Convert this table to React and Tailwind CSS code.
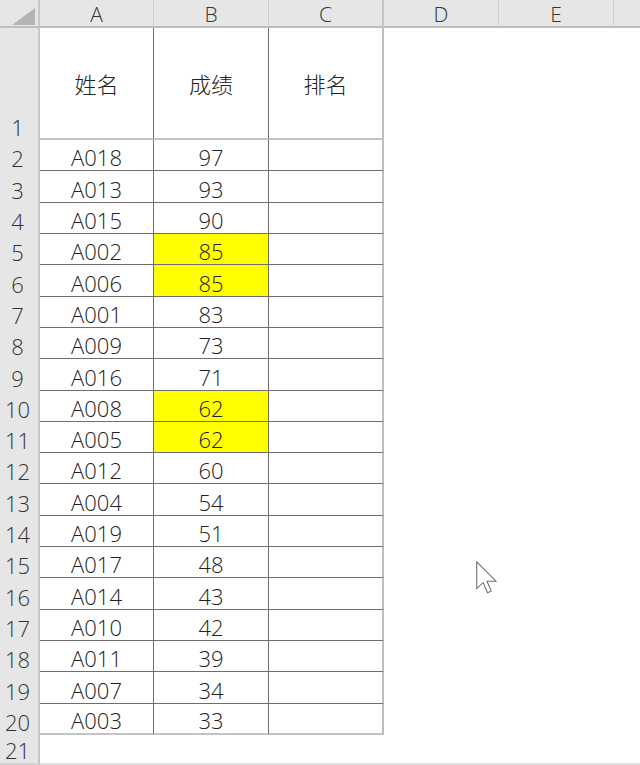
import React from "react";

const rows = [
  ["A018", "97"],
  ["A013", "93"],
  ["A015", "90"],
  ["A002", "85", true],
  ["A006", "85", true],
  ["A001", "83"],
  ["A009", "73"],
  ["A016", "71"],
  ["A008", "62", true],
  ["A005", "62", true],
  ["A012", "60"],
  ["A004", "54"],
  ["A019", "51"],
  ["A017", "48"],
  ["A014", "43"],
  ["A010", "42"],
  ["A011", "39"],
  ["A007", "34"],
  ["A003", "33"],
];

const font = { fontFamily: '"Open Sans", "Noto Sans CJK SC", sans-serif' };
const cjk = { fontFamily: '"Noto Sans CJK SC", sans-serif' };

export default function App() {
  const colHead = "bg-[#e6e6e6] border-b-2 border-b-[#bdbdbd] flex items-end justify-center text-[21px] leading-[24px] font-light text-[#333]";
  const rowHead = "bg-[#e6e6e6] border-r-2 border-r-[#c8c8c8] flex items-end justify-center pr-[3px] text-[22px] leading-[26px] font-light text-[#333]";
  const cell = "flex items-end justify-center text-[22px] leading-[26px] font-light text-[#222]";
  return (
    <div
      className="relative w-[640px] h-[765px] overflow-hidden bg-white grid grid-cols-[40px_114px_115px_115px_115px_115px_1fr] grid-rows-[28px_112px_repeat(19,minmax(0,1fr))_30px]"
      style={font}
    >
      {/* header row */}
      <div className="bg-[#e6e6e6] border-b-2 border-b-[#bdbdbd] border-r-2 border-r-[#c8c8c8] relative">
        <div className="absolute left-[12px] top-[8px] w-0 h-0 border-l-[23px] border-l-transparent border-b-[17px] border-b-[#b4b4b4]" />
      </div>
      {["A", "B", "C", "D", "E"].map((c, i) => (
        <div key={c} className={`${colHead} border-r ${i === 2 ? "border-r-2 border-r-[#c4c4c4]" : "border-r-[#cfcfcf]"}`}>
          {c}
        </div>
      ))}
      <div className={colHead} />

      {/* row 1 */}
      <div className={rowHead}>1</div>
      <div className="border-r border-r-[#6e6e6e] border-b-2 border-b-[#c4c4c4] flex items-center justify-center text-[22px] font-light text-[#222]" style={cjk}>姓名</div>
      <div className="border-r border-r-[#6e6e6e] border-b-2 border-b-[#c4c4c4] flex items-center justify-center text-[22px] font-light text-[#222]" style={cjk}>成绩</div>
      <div className="border-r-2 border-r-[#bdbdbd] border-b-2 border-b-[#c4c4c4] flex items-center justify-center text-[22px] font-light text-[#222]" style={cjk}>排名</div>
      <div />
      <div />
      <div />

      {rows.map(([name, score, hl], i) => {
        const last = i === rows.length - 1;
        const bb = last ? "border-b-2 border-b-[#c4c4c4]" : "border-b border-b-[#6e6e6e]";
        return (
          <React.Fragment key={name}>
            <div className={rowHead}>{i + 2}</div>
            <div className={`border-r border-r-[#6e6e6e] ${bb} ${cell}`}>{name}</div>
            <div className={`border-r border-r-[#6e6e6e] ${bb} ${hl ? "bg-[#ffff00]" : ""} ${cell}`}>{score}</div>
            <div className={`border-r-2 border-r-[#bdbdbd] ${bb}`} />
            <div />
            <div />
            <div />
          </React.Fragment>
        );
      })}

      {/* row 21 */}
      <div className={`${rowHead} border-b-2 border-b-[#d0d0d0]`}>21</div>
      <div className="col-span-6 border-b-2 border-b-[#e0e0e0]" />

      {/* mouse cursor */}
      <svg className="absolute left-[476px] top-[561px]" width="22" height="34" viewBox="0 0 12 18.5">
        <path
          d="M0.4 0.4 L0.4 15 L3.9 11.7 L6.3 17.3 L8.3 16.4 L6 11 L10.9 11 Z"
          fill="#ffffff"
          stroke="#6a6a6a"
          strokeWidth="0.55"
          strokeLinejoin="miter"
        />
      </svg>
    </div>
  );
}
